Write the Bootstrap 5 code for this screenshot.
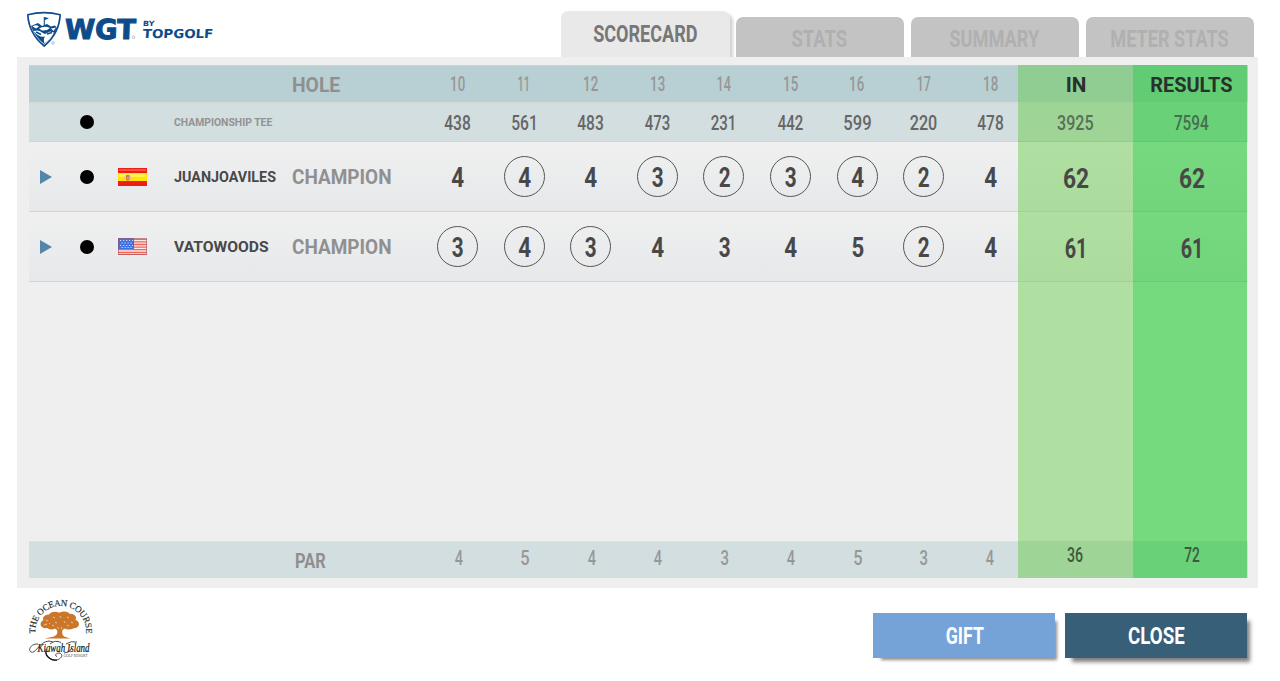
<!DOCTYPE html>
<html lang="en">
<head>
  <meta charset="UTF-8">
  <meta name="viewport" content="width=device-width, initial-scale=1">
  <title>Scorecard - WGT by Topgolf</title>

  <!-- Bootstrap CSS -->
  <link rel="stylesheet" href="https://cdn.jsdelivr.net/npm/bootstrap@5.3.0/dist/css/bootstrap.min.css">

  <style>
    body {
      font-family: Roboto, "Liberation Sans", sans-serif;
      background-color: #fff;
      width: 1280px;
      height: 681px;
      overflow: hidden;
      line-height: 1;
    }
    .fit { display: inline-block; white-space: nowrap; }
    .fit-start { transform-origin: left center; }

    /* Header and tabs */
    .top-bar { height: 57px; padding: 11px 26px 0 26px; }
    .wgt-logo { width: 190px; height: 38px; }
    .score-tabs { gap: 7px; }
    .score-tabs .nav-link {
      width: 168px;
      height: 40px;
      padding: 3px 1px 0 0;
      border-radius: 7px 7px 0 0;
      background-color: #c3c3c3;
      color: #b0b0b0;
      font-size: 24px;
      font-weight: 700;
      line-height: 1;
    }
    .score-tabs .nav-link.active {
      width: 169px;
      height: 46px;
      padding: 0;
      margin-right: -1px;
      background-color: #e9e9e9;
      color: #777;
      box-shadow: 3px 3px 3px rgba(0, 0, 0, .18);
      clip-path: inset(-1px -7px 0 0);
    }

    /* Panel */
    .score-panel {
      width: 1241px;
      height: 531px;
      margin-left: 17px;
      padding: 8px 10.5px 10px 12px;
      background-color: #efefef;
    }
    .score-row {
      display: grid;
      grid-template-columns: 34px 48px 43px 19.5px 119px 131.7px 593.8px 115px 114.5px;
      align-items: stretch;
    }
    .score-row > div { display: flex; align-items: center; min-width: 0; }
    .holes { width: 599.4px; flex: none; }
    .holes > div { width: 66.6px; display: flex; align-items: center; justify-content: center; }
    .row-hole { height: 37px; background-color: #b8cfd3; border-top: 1px solid #c5d4d6; color: #979797; font-size: 20.5px; font-weight: 500; }
    .row-tee { height: 40px; background-color: #d3dee0; border-top: 2px solid #d4d9da; border-bottom: 1px solid #d0d3d4; color: #666; font-size: 20.5px; font-weight: 500; }
    .row-tee .holes { padding-top: 1px; }
    .row-player { height: 70px; background-image: linear-gradient(#f0f0f0, #e6e8ea); border-bottom: 1px solid #d4d4d4; color: #484848; font-size: 27px; font-weight: 700; }
    .row-empty { height: 259px; }
    .row-par { height: 37px; background-color: #d3dee0; border-top: 1px solid #dde3e4; color: #979797; font-size: 20.5px; font-weight: 500; }
    .cell-in, .cell-results { justify-content: center; }
    .score-row > .cell-results { padding-left: 3px; }
    .cell-in { background-color: #afe0a2; }
    .cell-results { background-color: #75d97e; }
    .row-hole .cell-in, .row-hole .cell-results { color: #29312d; font-weight: 700; font-size: 20px; padding-top: 3px; margin-top: -1px; }
    .row-hole .cell-in { background-color: #8fcd92; }
    .row-hole .cell-results { background-color: #61cc73; }
    .row-tee .cell-in, .row-par .cell-in { background-color: #9ed596; color: #58705a; }
    .row-tee .cell-results, .row-par .cell-results { background-color: #69d177; color: #476e4d; }
    .row-tee .cell-in, .row-tee .cell-results { margin: -2px 0 -1px; padding-top: 3px; border-bottom: 1px solid rgba(0, 0, 0, .05); }
    .row-player .cell-in { background-image: linear-gradient(#afe0a2, #abdb9d); margin-bottom: -1px; border-bottom: 1px solid #a2d196; }
    .row-player .cell-results { background-image: linear-gradient(#76d97f, #72d47b); margin-bottom: -1px; border-bottom: 1px solid #6bca75; }
    .row-player .cell-in, .row-player .cell-results { font-size: 28px; padding-top: 4px; }
    .row-player .cell-in { padding-left: 1px; }
    .row-par .cell-in, .row-par .cell-results { color: #3d5a40; font-size: 19.5px; margin-top: -1px; padding-bottom: 8px; }
    .row-par .holes { padding: 0 0 4px 1px; }

    .row-label { font-size: 20px; font-weight: 700; color: #8f8f8f; margin: 1px 0 0 -1px; }
    .row-player .row-label { color: #909090; }
    .row-par .row-label { margin-left: 2px; }
    .tee-label { font-size: 11.5px; font-weight: 700; color: #929292; }
    .player-name { font-size: 15.5px; color: #484848; margin: 2px 0 0; }
    .ball-dot { width: 14px; height: 14px; border-radius: 50%; background-color: #000; }
    .row-tee .ball-dot { margin-bottom: 2px; }
    .score-num { width: 41px; height: 41px; display: flex; align-items: center; justify-content: center; padding: 4px 0 0 1px; border: 1.4px solid transparent; }
    .birdie { border-color: #555; border-radius: 50%; }

    /* Footer */
    .bottom-bar { height: 93px; padding: 11px 33px 0 27px; }
    .course-logo { width: 68px; height: 66px; overflow: visible; }
    .score-actions { gap: 9.5px; padding-top: 14px; }
    .btn-score {
      width: 182.5px;
      height: 45px;
      padding: 0 0 0 2px;
      border: 0;
      border-radius: 0;
      color: #fff;
      font-size: 24px;
      font-weight: 700;
      line-height: 1;
    }
    .btn-gift { background-color: #75a3d8; box-shadow: 5px 5px 3px -3px rgba(0, 0, 0, .45); }
    .btn-close-card { background-color: #375f78; box-shadow: 5px 6px 4px -2px rgba(0, 0, 0, .5); }
  </style>
</head>
<body>

  <!-- Logo and tabs -->
  <header class="top-bar d-flex justify-content-between">
    <svg class="wgt-logo" viewBox="26 11 190 38" fill="#0d4c8b">
      <path d="M27.800 14.800Q44 10.500 60.200 14.800Q59 34 44.200 46Q29 34 27.800 14.800Z" fill="#fff" stroke="#0d4c8b" stroke-width="1.700" stroke-linejoin="round"/>
      <path d="M31 26L38 23L42 26L47 24L51 26.500L55 25.500L57 28Q53 38 44.200 44Q35 37 31 26Z"/>
      <path d="M44.300 17V28" stroke="#0d4c8b" stroke-width="1.100"/>
      <path d="M44.500 17L49 18.300L44.500 20.300Z"/>
      <path d="M32.500 26.500Q36 24 39 26.500L36 28.500ZM39 28.500Q44 25.500 50 28Q47 31 42 30.500ZM51 28.500L56 27.500L53.500 31ZM33.500 31Q39 29.500 42 32.500L45 34L50 31.500L54 32.500Q51 39 44.500 43.500Q43 39 45 36.500Q39 38 33.500 31Z" fill="#fff"/>
      <path d="M36 32L41 34.500M47 34L52 32.500" stroke="#0d4c8b" stroke-width="1.400"/>
      <circle cx="53" cy="43" r="1.300" fill="none" stroke="#7fa0c0" stroke-width=".6"/>
      <text transform="translate(64.500 38.500) skewX(-2)" font-family="DejaVu Sans" font-weight="700" font-size="27.500" stroke="#0d4c8b" stroke-width="1.100" textLength="71" lengthAdjust="spacingAndGlyphs">WGT</text>
      <circle cx="133.500" cy="37.300" r="1.300" fill="none" stroke="#7fa0c0" stroke-width=".6"/>
      <text transform="translate(142.700 25.500) skewX(-4)" font-family="DejaVu Sans" font-weight="700" font-size="7.200" textLength="11.500" lengthAdjust="spacingAndGlyphs">BY</text>
      <text transform="translate(142.500 37.900) skewX(-4)" font-family="DejaVu Sans" font-weight="700" font-size="12.300" textLength="70.500" lengthAdjust="spacingAndGlyphs">TOPGOLF</text>
    </svg>

    <nav class="nav score-tabs align-items-end flex-nowrap">
      <a class="nav-link active d-flex align-items-center justify-content-center" href="#"><span class="fit" data-w="104">SCORECARD</span></a>
      <a class="nav-link d-flex align-items-center justify-content-center" href="#"><span class="fit" data-w="55">STATS</span></a>
      <a class="nav-link d-flex align-items-center justify-content-center" href="#"><span class="fit" data-w="90">SUMMARY</span></a>
      <a class="nav-link d-flex align-items-center justify-content-center" href="#"><span class="fit" data-w="117">METER STATS</span></a>
    </nav>
  </header>

  <!-- Scorecard -->
  <main class="score-panel">
    <div class="score-row row-hole">
      <div></div><div></div><div></div><div></div><div></div>
      <div><span class="fit fit-start row-label" data-w="47">HOLE</span></div>
      <div><div class="holes d-flex">
        <div><span class="fit" data-w="14">10</span></div>
        <div><span class="fit" data-w="10">11</span></div>
        <div><span class="fit" data-w="14">12</span></div>
        <div><span class="fit" data-w="14">13</span></div>
        <div><span class="fit" data-w="14">14</span></div>
        <div><span class="fit" data-w="14">15</span></div>
        <div><span class="fit" data-w="14">16</span></div>
        <div><span class="fit" data-w="13">17</span></div>
        <div><span class="fit" data-w="14">18</span></div>
      </div></div>
      <div class="cell-in"><span class="fit" data-w="18.500">IN</span></div>
      <div class="cell-results"><span class="fit" data-w="81">RESULTS</span></div>
    </div>

    <div class="score-row row-tee">
      <div></div>
      <div class="justify-content-center"><span class="ball-dot"></span></div>
      <div></div><div></div>
      <div><span class="fit fit-start tee-label" data-w="99">CHAMPIONSHIP TEE</span></div>
      <div></div>
      <div><div class="holes d-flex">
        <div><span class="fit" data-w="26">438</span></div>
        <div><span class="fit" data-w="23">561</span></div>
        <div><span class="fit" data-w="26">483</span></div>
        <div><span class="fit" data-w="25">473</span></div>
        <div><span class="fit" data-w="23">231</span></div>
        <div><span class="fit" data-w="25">442</span></div>
        <div><span class="fit" data-w="27">599</span></div>
        <div><span class="fit" data-w="27">220</span></div>
        <div><span class="fit" data-w="26">478</span></div>
      </div></div>
      <div class="cell-in"><span class="fit" data-w="36">3925</span></div>
      <div class="cell-results"><span class="fit" data-w="35">7594</span></div>
    </div>

    <div class="score-row row-player">
      <div class="justify-content-center"><svg width="12" height="14"><path d="M0 0L12 7L0 14Z" fill="#5486aa"/></svg></div>
      <div class="justify-content-center"><span class="ball-dot"></span></div>
      <div class="justify-content-center">
        <svg width="29" height="18" viewBox="0 0 29 18">
          <rect width="29" height="18" fill="#ee1c14"/>
          <rect x="1" y="1" width="27" height="2" fill="#f8503c"/>
          <rect y="5" width="29" height="8" fill="#ffe500"/>
          <rect x="1" y="6" width="27" height="3" fill="#fff04a"/>
          <path d="M6.500 8h1v4h-1zM12 8h1v4h-1z" fill="#e0c48a"/>
          <path d="M8 7h3.500v4.500L9.800 13L8 11.500Z" fill="#dd7048"/>
          <circle cx="9.800" cy="10" r="1.200" fill="#c9a0a0"/>
        </svg>
      </div>
      <div></div>
      <div><span class="fit fit-start player-name" data-w="101.500">JUANJOAVILES</span></div>
      <div><span class="fit fit-start row-label" data-w="98.500">CHAMPION</span></div>
      <div><div class="holes d-flex">
        <div><span class="score-num"><span class="fit" data-w="12.500">4</span></span></div>
        <div><span class="score-num birdie"><span class="fit" data-w="12.500">4</span></span></div>
        <div><span class="score-num"><span class="fit" data-w="12.500">4</span></span></div>
        <div><span class="score-num birdie"><span class="fit" data-w="11.500">3</span></span></div>
        <div><span class="score-num birdie"><span class="fit" data-w="11.500">2</span></span></div>
        <div><span class="score-num birdie"><span class="fit" data-w="11.500">3</span></span></div>
        <div><span class="score-num birdie"><span class="fit" data-w="12.500">4</span></span></div>
        <div><span class="score-num birdie"><span class="fit" data-w="11.500">2</span></span></div>
        <div><span class="score-num"><span class="fit" data-w="12.500">4</span></span></div>
      </div></div>
      <div class="cell-in"><span class="fit" data-w="24.500">62</span></div>
      <div class="cell-results"><span class="fit" data-w="24.500">62</span></div>
    </div>

    <div class="score-row row-player">
      <div class="justify-content-center"><svg width="12" height="14"><path d="M0 0L12 7L0 14Z" fill="#5486aa"/></svg></div>
      <div class="justify-content-center"><span class="ball-dot"></span></div>
      <div class="justify-content-center">
        <svg width="29" height="17" viewBox="0 0 29 17">
          <rect width="29" height="17" fill="#fbe9e6"/>
          <path d="M0 1.300H29M0 3.900H29M0 6.500H29M0 9.100H29M0 11.700H29M0 14.300H29M0 16.500H29" stroke="#ee665c" stroke-width="1.300"/>
          <rect width="16" height="11" fill="#3f6fe0"/>
          <path d="M2 2.500H15M3.500 5H15M2 7.500H15M3.500 9.500H15" stroke="#d5e2ff" stroke-width="1.100" stroke-dasharray="1.200 1.800"/>
          <rect x=".5" y=".5" width="28" height="16" fill="none" stroke="#a45a64" stroke-opacity=".6"/>
        </svg>
      </div>
      <div></div>
      <div><span class="fit fit-start player-name" data-w="94">VATOWOODS</span></div>
      <div><span class="fit fit-start row-label" data-w="98.500">CHAMPION</span></div>
      <div><div class="holes d-flex">
        <div><span class="score-num birdie"><span class="fit" data-w="11.500">3</span></span></div>
        <div><span class="score-num birdie"><span class="fit" data-w="12.500">4</span></span></div>
        <div><span class="score-num birdie"><span class="fit" data-w="11.500">3</span></span></div>
        <div><span class="score-num"><span class="fit" data-w="12.500">4</span></span></div>
        <div><span class="score-num"><span class="fit" data-w="11.500">3</span></span></div>
        <div><span class="score-num"><span class="fit" data-w="12.500">4</span></span></div>
        <div><span class="score-num"><span class="fit" data-w="11.500">5</span></span></div>
        <div><span class="score-num birdie"><span class="fit" data-w="11.500">2</span></span></div>
        <div><span class="score-num"><span class="fit" data-w="12.500">4</span></span></div>
      </div></div>
      <div class="cell-in"><span class="fit" data-w="18.500">61</span></div>
      <div class="cell-results"><span class="fit" data-w="18.500">61</span></div>
    </div>

    <div class="score-row row-empty">
      <div></div><div></div><div></div><div></div><div></div><div></div><div></div>
      <div class="cell-in"></div>
      <div class="cell-results"></div>
    </div>

    <div class="score-row row-par">
      <div></div><div></div><div></div><div></div><div></div>
      <div><span class="fit fit-start row-label" data-w="30">PAR</span></div>
      <div><div class="holes d-flex">
        <div><span class="fit" data-w="8.500">4</span></div>
        <div><span class="fit" data-w="8">5</span></div>
        <div><span class="fit" data-w="8.500">4</span></div>
        <div><span class="fit" data-w="8.500">4</span></div>
        <div><span class="fit" data-w="8">3</span></div>
        <div><span class="fit" data-w="8.500">4</span></div>
        <div><span class="fit" data-w="8">5</span></div>
        <div><span class="fit" data-w="8">3</span></div>
        <div><span class="fit" data-w="8.500">4</span></div>
      </div></div>
      <div class="cell-in"><span class="fit" data-w="16">36</span></div>
      <div class="cell-results"><span class="fit" data-w="15.500">72</span></div>
    </div>
  </main>

  <!-- Course logo and buttons -->
  <footer class="bottom-bar d-flex justify-content-between">
    <svg class="course-logo" viewBox="27 599 68 66">
      <defs><path id="arc" d="M35.500 633.500A25.300 25.300 0 1 1 85.900 633.500"/></defs>
      <text font-family="Liberation Serif" font-size="9" fill="#1d2b2b" stroke="#1d2b2b" stroke-width=".15"><textPath href="#arc" textLength="84">THE OCEAN COURSE</textPath></text>
      <g fill="#cb7729">
        <ellipse cx="49" cy="618.500" rx="6" ry="4"/><ellipse cx="45.500" cy="624" rx="5" ry="4.300"/>
        <ellipse cx="55" cy="615.300" rx="6" ry="3.600"/><ellipse cx="64" cy="615" rx="6" ry="3.600"/>
        <ellipse cx="70.500" cy="618" rx="5.500" ry="4.200"/><ellipse cx="74" cy="624" rx="5" ry="4.300"/>
        <ellipse cx="60" cy="620.500" rx="13" ry="6.500"/><ellipse cx="51.500" cy="626.500" rx="5" ry="3"/><ellipse cx="69" cy="626.500" rx="6" ry="3"/>
        <path d="M49 624L57 630Q58.500 634.500 54 636.500L44.500 638.500H70.500L64 636.500Q61.500 634 62.500 630L71 624Z"/>
      </g>
      <path d="M46 620l2 1M53 617l2 1M60 616l1 2M67 617l2 1M71 622l2 1M44 625l3-1M55 622l2 1M64 621l1 2M52 625l2 1M67 626l2-1M57.500 627l1 2M62 627l-1 2M49 623l1 1" stroke="#f7e3cd" stroke-width=".7"/>
      <text x="37.500" y="652" font-family="Liberation Serif" font-style="italic" font-size="13" fill="#111" stroke="#111" stroke-width=".2" textLength="52" lengthAdjust="spacingAndGlyphs">Kiawah Island</text>
      <g fill="none" stroke="#222" stroke-width=".8">
        <path d="M38 644C31 643.500 27.500 650 31 652C35 654 38 645 45 642Q49 640 53 642"/>
        <path d="M46 649C44 656 52 661.500 57 660C63 658 63 653.500 59 653C55.500 653 54.500 656 57 656.500"/>
        <path d="M50 644Q55 639.500 61 642.500M64 653Q69 653.500 72 648M66 644Q71 640.500 77 642"/>
      </g>
      <path d="M46 651C45 656 51 661 57 660" fill="none" stroke="#111" stroke-width="1.200"/>
      <text x="63.500" y="656.500" font-family="Liberation Serif" font-size="3.800" fill="#555" textLength="24">GOLF RESORT</text>
    </svg>

    <div class="score-actions d-flex align-items-start">
      <button class="btn btn-score btn-gift" type="button"><span class="fit" data-w="37.500">GIFT</span></button>
      <button class="btn btn-score btn-close-card" type="button"><span class="fit" data-w="55.500">CLOSE</span></button>
    </div>
  </footer>

  <script>
    // Condense each label to the width given in data-w
    const ctx = document.createElement('canvas').getContext('2d');
    document.querySelectorAll('.fit').forEach((el) => {
      const s = getComputedStyle(el);
      ctx.font = `${s.fontWeight} ${s.fontSize} ${s.fontFamily}`;
      const m = ctx.measureText(el.textContent);
      const ink = m.actualBoundingBoxLeft + m.actualBoundingBoxRight;
      el.style.transform = `scaleX(${el.dataset.w / ink})`;
    });
  </script>

  <!-- Bootstrap JS -->
  <script src="https://cdn.jsdelivr.net/npm/bootstrap@5.3.0/dist/js/bootstrap.bundle.min.js"></script>
</body>
</html>
